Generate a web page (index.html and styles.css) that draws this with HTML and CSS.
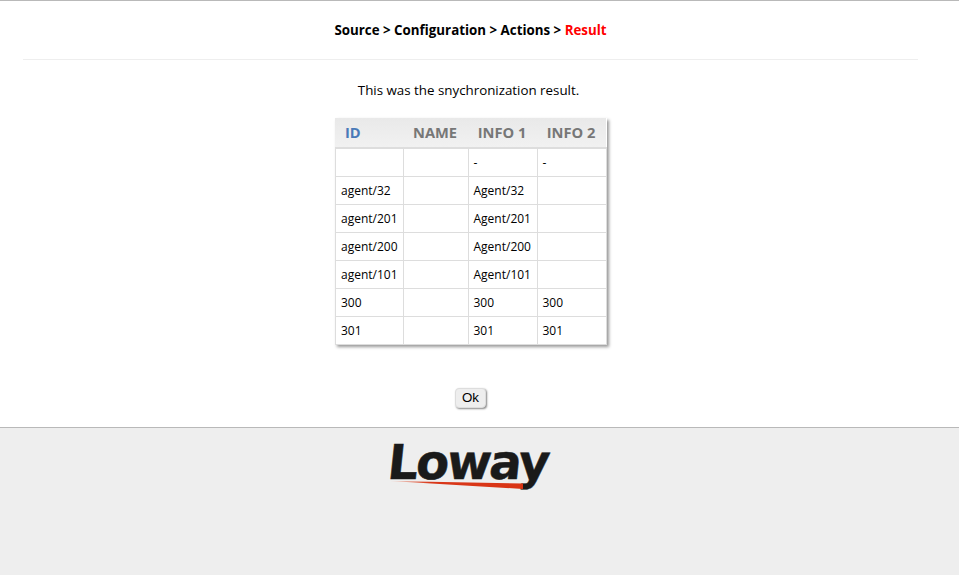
FILE: index.html

```html
<!DOCTYPE html>
<html lang="en">
<head>
    <meta charset="UTF-8">
    <title>Synchronization result</title>
    <link rel="stylesheet" href="styles.css">
</head>
<body>

    <div class="main">
        <div class="steps">Source &gt; Configuration &gt; Actions &gt; <span class="current">Result</span></div>
        <hr class="divider">

        <p class="intro">This was the snychronization result.</p>

        <table class="result">
            <thead>
                <tr>
                    <th class="sorted">ID</th>
                    <th>NAME</th>
                    <th>INFO 1</th>
                    <th>INFO 2</th>
                </tr>
            </thead>
            <tbody>
                <tr><td></td><td></td><td>-</td><td>-</td></tr>
                <tr><td>agent/32</td><td></td><td>Agent/32</td><td></td></tr>
                <tr><td>agent/201</td><td></td><td>Agent/201</td><td></td></tr>
                <tr><td>agent/200</td><td></td><td>Agent/200</td><td></td></tr>
                <tr><td>agent/101</td><td></td><td>Agent/101</td><td></td></tr>
                <tr><td>300</td><td></td><td>300</td><td>300</td></tr>
                <tr><td>301</td><td></td><td>301</td><td>301</td></tr>
            </tbody>
        </table>

        <div class="actions">
            <button class="ok-btn">Ok</button>
        </div>
    </div>

    <div class="footer">
        <div class="logo">
            <span class="logo-text">Loway</span>
            <svg class="logo-swoosh" width="136" height="10" viewBox="0 0 136 10">
                <defs>
                    <linearGradient id="swoosh" x1="0" x2="1" y1="0" y2="0">
                        <stop offset="0" stop-color="#f0c8bc"/>
                        <stop offset="0.3" stop-color="#d9381a"/>
                        <stop offset="1" stop-color="#d93414"/>
                    </linearGradient>
                </defs>
                <path d="M0 1 L133 3.5 L133 9 Z" fill="url(#swoosh)"/>
            </svg>
        </div>
    </div>

</body>
</html>
```

FILE: styles.css

```css
html, body {
    margin: 0;
    padding: 0;
}

body {
    font-family: "Open Sans", sans-serif;
    background-color: #fff;
    color: #000;
    height: 575px;
    overflow: hidden;
    display: flex;
    flex-direction: column;
}

.main {
    height: 426px;
    border-top: 1px solid #b9b9b9;
    padding: 0 18px 0 0;
    display: flex;
    flex-direction: column;
    align-items: center;
}

.steps {
    margin-top: 20px;
    height: 19px;
    line-height: 19px;
    font-size: 13.33px;
    font-weight: bold;
}

.current {
    color: #f00;
}

.divider {
    width: 895px;
    margin: 19px 0 0;
    border: none;
    border-top: 1px solid #eee;
}

.intro {
    margin: 21px 4px 0 0;
    font-size: 13.33px;
    line-height: 18px;
}

.result {
    margin-top: 19px;
    border-collapse: collapse;
    font-size: 12px;
    box-shadow: 2px 2px 3px #999;
}

.result th {
    height: 28px;
    padding: 0 1px 1px 0;
    background: linear-gradient(#e9e9e9, #f1f1f1);
    color: #777;
    font-size: 14.67px;
    text-align: center;
    border: none;
    border-bottom: 2px solid #ddd;
}

.result th.sorted {
    color: #4a7ab8;
    text-align: left;
    padding-left: 10px;
}

.result td {
    height: 27px;
    padding: 0 5px;
    border: 1px solid #ddd;
}

.result td:nth-child(1) { width: 57px; padding: 0 4.5px 0 5.5px; }
.result td:nth-child(2) { width: 54px; }
.result td:nth-child(3) { width: 58px; }
.result td:nth-child(4) { width: 58px; }

.actions {
    margin-top: 40px;
}

.ok-btn {
    font-family: "Liberation Sans", Arial, sans-serif;
    font-size: 13.33px;
    height: 20px;
    width: 31px;
    padding: 0;
    background-color: #eee;
    border: 1px solid #ddd;
    border-radius: 4px;
    box-shadow: 1px 1px 2px #888;
    color: #000;
}

.footer {
    flex: 1;
    background-color: #eee;
    border-top: 1px solid #b9b9b9;
    padding-right: 18px;
    display: flex;
    justify-content: center;
}

.logo {
    position: relative;
    width: 162px;
    height: 64px;
}

.logo-text {
    display: block;
    margin-top: 4px;
    margin-left: -2px;
    font-family: "DejaVu Sans", sans-serif;
    font-weight: bold;
    font-size: 48px;
    line-height: 60px;
    letter-spacing: -2px;
    color: #1a1a1a;
    -webkit-text-stroke: 0.5px #1a1a1a;
    transform: skewX(-6deg);
}

.logo-swoosh {
    position: absolute;
    left: 0;
    top: 52px;
}
```
